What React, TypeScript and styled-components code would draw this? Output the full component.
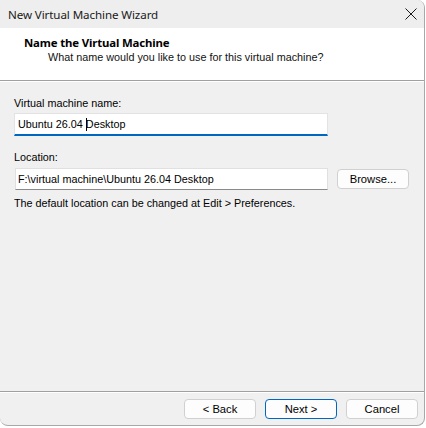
import React from "react";
import styled, { createGlobalStyle } from "styled-components";

const Global = createGlobalStyle`
  html, body { margin: 0; padding: 0; background: #ffffff; }
  body { font-family: "Liberation Sans", Arial, sans-serif; font-size: 10.8px; color: #000; }
  * { box-sizing: border-box; }
`;

const Window = styled.div`
  width: 425px;
  height: 426px;
  background: #f0f0f0;
  border-right: 1px solid #a8a8a8;
  border-bottom: 1px solid #a8a8a8;
  border-radius: 0 8px 8px 8px;
  display: flex;
  flex-direction: column;
  overflow: hidden;
`;

const TitleBar = styled.div`
  height: 28px;
  flex: none;
  display: flex;
  align-items: center;
  justify-content: space-between;
  padding: 0 7px 0 8px;
  background: #eeeeee;
`;

const TitleText = styled.span`
  font-family: "Noto Sans", "Open Sans", sans-serif;
  font-size: 11.6px;
  letter-spacing: -0.1px;
  color: #1a1a1a;
`;

const CloseBox = styled.div`
  width: 12px;
  height: 12px;
  display: flex;
`;

const Header = styled.div`
  height: 53px;
  flex: none;
  background: #ffffff;
  border-bottom: 1px solid #a0a0a0;
  padding: 7px 0 0 24px;
  display: flex;
  flex-direction: column;
`;

const HeaderTitle = styled.div`
  font-family: "Noto Sans", "Open Sans", sans-serif;
  font-weight: 700;
  font-size: 11.4px;
  line-height: 15px;
  letter-spacing: -0.15px;
`;

const HeaderSub = styled.div`
  padding-left: 24px;
  line-height: 15px;
  color: #111;
`;

const Body = styled.div`
  flex: 1;
  padding: 14px 0 0 14px;
  display: flex;
  flex-direction: column;
  border-top: 1px solid #ffffff;
`;

const Label = styled.div<{ $top?: number }>`
  margin-top: ${(p) => p.$top ?? 0}px;
  line-height: 15px;
`;

const NameInput = styled.div`
  margin-top: 2px;
  width: 314px;
  height: 23px;
  background: #ffffff;
  border: 1px solid #e3e3e3;
  border-bottom: 2px solid #0067c0;
  padding-left: 3px;
  display: flex;
  align-items: center;
  white-space: pre;
`;

const Caret = styled.span`
  display: inline-block;
  width: 1px;
  height: 13px;
  background: #000;
  margin-right: -1px;
  vertical-align: middle;
`;

const Row = styled.div`
  margin-top: 3px;
  display: flex;
  align-items: center;
  gap: 9px;
`;

const PathInput = styled.div`
  margin-left: 1px;
  width: 313px;
  height: 22px;
  background: #ffffff;
  border: 1px solid #e0e0e0;
  border-bottom-color: #8a8a8a;
  padding-left: 2px;
  display: flex;
  align-items: center;
  white-space: pre;
`;

const Button = styled.button<{ $primary?: boolean }>`
  width: 72px;
  height: 20px;
  padding: 0;
  font-family: inherit;
  font-size: 11.2px;
  color: #000;
  background: #fdfdfd;
  border: 1px solid ${(p) => (p.$primary ? "#0067c0" : "#d0d0d0")};
  border-radius: 4px;
  display: flex;
  align-items: center;
  justify-content: center;
`;

const Note = styled.div`
  margin-top: 6px;
  line-height: 15px;
`;

const Footer = styled.div`
  flex: none;
  height: 34px;
  border-top: 1px solid #a0a0a0;
  box-shadow: inset 0 1px 0 #ffffff;
  display: flex;
  justify-content: flex-end;
  align-items: flex-start;
  padding: 7px 6px 0 0;
  gap: 9px;
`;

export default function App() {
  return (
    <>
      <Global />
      <Window>
        <TitleBar>
          <TitleText>New Virtual Machine Wizard</TitleText>
          <CloseBox>
            <svg width="12" height="12" viewBox="0 0 12 12">
              <path d="M0.5 0.5 L11.5 11.5 M11.5 0.5 L0.5 11.5" stroke="#1a1a1a" strokeWidth="1" fill="none" />
            </svg>
          </CloseBox>
        </TitleBar>
        <Header>
          <HeaderTitle>Name the Virtual Machine</HeaderTitle>
          <HeaderSub>What name would you like to use for this virtual machine?</HeaderSub>
        </Header>
        <Body>
          <Label>Virtual machine name:</Label>
          <NameInput>
            Ubuntu 26.04 <Caret />Desktop
          </NameInput>
          <Label $top={14}>Location:</Label>
          <Row>
            <PathInput>F:\virtual machine\Ubuntu 26.04 Desktop</PathInput>
            <Button>Browse...</Button>
          </Row>
          <Note>The default location can be changed at Edit &gt; Preferences.</Note>
        </Body>
        <Footer>
          <Button>&lt; Back</Button>
          <Button $primary>Next &gt;</Button>
          <Button>Cancel</Button>
        </Footer>
      </Window>
    </>
  );
}
